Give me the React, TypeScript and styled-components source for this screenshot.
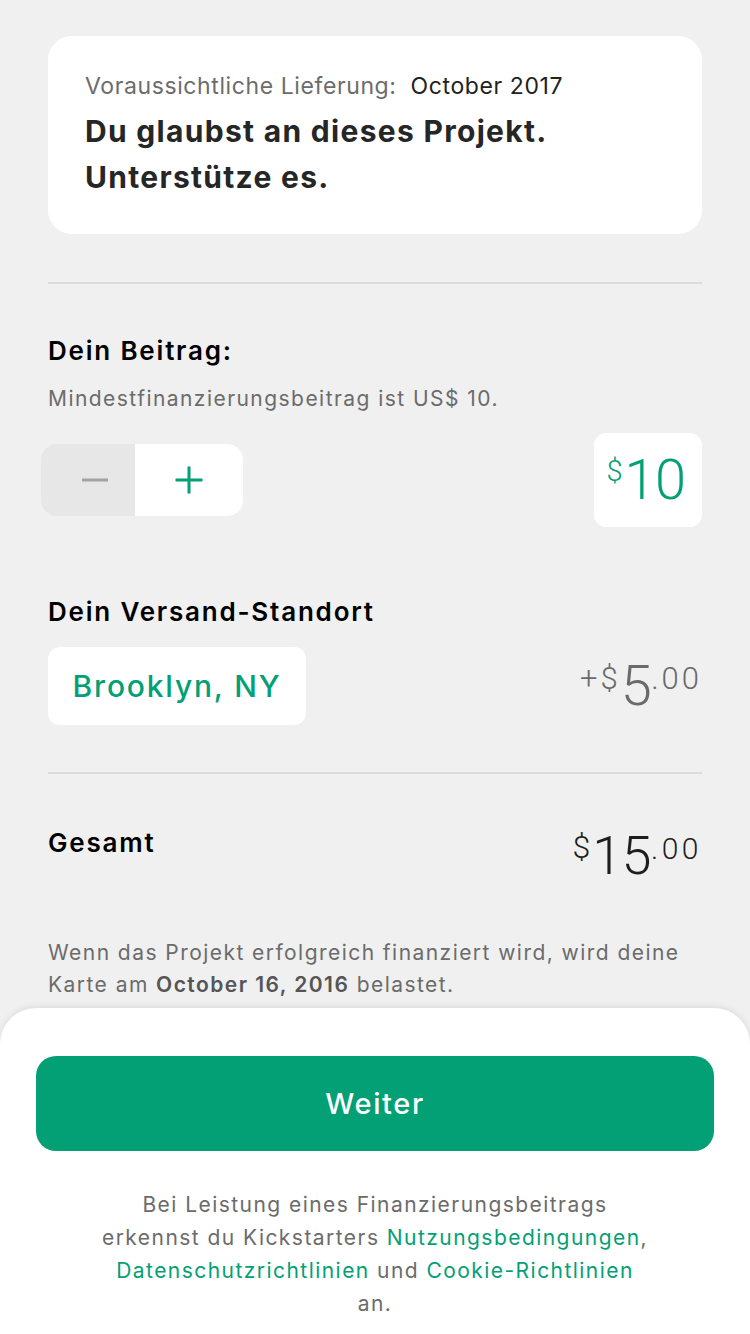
import React from "react";
import styled, { createGlobalStyle } from "styled-components";

const GREEN = "#02a074";

const Global = createGlobalStyle`
  html, body { margin: 0; padding: 0; background: #f0f0f0; }
  body { font-family: Inter, Roboto, "Noto Sans", sans-serif; -webkit-font-smoothing: antialiased; }
  * { box-sizing: border-box; }
`;

const Page = styled.div`
  width: 750px;
  height: 1334px;
  background: #f0f0f0;
  display: flex;
  flex-direction: column;
  overflow: hidden;
`;

const Content = styled.div`
  flex: 1;
  padding: 36px 48px 0;
  display: flex;
  flex-direction: column;
`;

const Card = styled.div`
  background: #fff;
  border-radius: 24px;
  padding: 36px 37px 36px;
  height: 198px;
`;

const Delivery = styled.div`
  font-size: 23px;
  line-height: 28px;
  color: #6c6c6c;
  display: flex;
  gap: 14px;
  letter-spacing: 0.6px;
`;

const DeliveryDate = styled.span`
  color: #222;
`;

const Headline = styled.h1`
  margin: 8px 0 0;
  font-size: 30px;
  line-height: 46px;
  font-weight: 700;
  color: #262626;
  letter-spacing: 1.3px;
`;

const Divider = styled.hr<{ $top: number }>`
  border: none;
  border-top: 2px solid #dcdcdc;
  margin: ${(p) => p.$top}px 0 0;
`;

const SectionTitle = styled.div<{ $top: number }>`
  margin-top: ${(p) => p.$top}px;
  font-size: 26px;
  line-height: 32px;
  font-weight: 600;
  color: #000;
  letter-spacing: 1.8px;
`;

const Note = styled.div<{ $top: number }>`
  margin-top: ${(p) => p.$top}px;
  font-size: 21px;
  line-height: 32px;
  color: #6b6b6b;
  letter-spacing: 1.45px;
`;

const Row = styled.div<{ $top: number; $align?: string }>`
  margin-top: ${(p) => p.$top}px;
  display: flex;
  justify-content: space-between;
  align-items: ${(p) => p.$align || "center"};
`;

const Stepper = styled.div`
  display: flex;
  height: 72px;
  width: 202px;
  margin-left: -7px;
  border-radius: 16px;
  overflow: hidden;
`;

const StepButton = styled.button<{ $active?: boolean }>`
  border: none;
  padding: 0 0 0 ${(p) => (p.$active ? 0 : 14)}px;
  background: ${(p) => (p.$active ? "#fff" : "#e7e7e7")};
  width: ${(p) => (p.$active ? 108 : 94)}px;
  display: flex;
  align-items: center;
  justify-content: center;
`;

const AmountBox = styled.div`
  background: #fff;
  border-radius: 12px;
  width: 108px;
  height: 94px;
  display: flex;
  align-items: center;
  justify-content: center;
  padding-right: 2px;
`;

const Sup = styled.span<{ $size: number; $offset: number; $ls?: number }>`
  font-size: ${(p) => p.$size}px;
  line-height: 1;
  margin-top: ${(p) => p.$offset}px;
  letter-spacing: ${(p) => p.$ls || 0}px;
`;

const Big = styled.span<{ $size: number; $gap?: number }>`
  font-size: ${(p) => p.$size}px;
  line-height: 1;
  letter-spacing: -0.5px;
  margin: 0 ${(p) => p.$gap || 0}px;
`;

const Money = styled.div<{ $color: string; $top?: number }>`
  display: flex;
  align-items: flex-start;
  color: ${(p) => p.$color};
  font-weight: 300;
  font-family: Roboto, Inter, sans-serif;
  margin-top: ${(p) => p.$top || 0}px;
`;

const Location = styled.div`
  background: #fff;
  border-radius: 12px;
  width: 258px;
  height: 78px;
  display: flex;
  align-items: center;
  justify-content: center;
  color: ${GREEN};
  font-size: 30px;
  font-weight: 500;
  letter-spacing: 1.8px;
`;

const Bold = styled.b`
  font-weight: 600;
  color: #555;
`;

const Sheet = styled.div`
  background: #fff;
  border-radius: 36px 36px 0 0;
  box-shadow: 0 -2px 6px rgba(0, 0, 0, 0.08);
  padding: 48px 36px 0;
  height: 326px;
`;

const Primary = styled.button`
  width: 100%;
  height: 95px;
  border: none;
  border-radius: 20px;
  background: ${GREEN};
  color: #fff;
  font-family: inherit;
  font-size: 29px;
  font-weight: 500;
  letter-spacing: 1.6px;
`;

const Legal = styled.p`
  margin: 37px 0 0;
  text-align: center;
  font-size: 21px;
  line-height: 33px;
  color: #6b6b6b;
  letter-spacing: 1.45px;
`;

const Link = styled.a`
  color: ${GREEN};
  text-decoration: none;
`;

const Minus = () => (
  <svg width="28" height="4" viewBox="0 0 28 4">
    <rect x="1" y="0.5" width="26" height="3" fill="#a2a2a2" />
  </svg>
);

const Plus = () => (
  <svg width="28" height="28" viewBox="0 0 28 28">
    <rect x="0.5" y="12.5" width="27" height="3" fill={GREEN} />
    <rect x="12.5" y="0.5" width="3" height="27" fill={GREEN} />
  </svg>
);

export default function App() {
  return (
    <Page>
      <Global />
      <Content>
        <Card>
          <Delivery>
            <span>Voraussichtliche Lieferung:</span>
            <DeliveryDate>October 2017</DeliveryDate>
          </Delivery>
          <Headline>
            Du glaubst an dieses Projekt.
            <br />
            Unterstütze es.
          </Headline>
        </Card>
        <Divider $top={48} />
        <SectionTitle $top={51}>Dein Beitrag:</SectionTitle>
        <Note $top={16}>Mindestfinanzierungsbeitrag ist US$ 10.</Note>
        <Row $top={18}>
          <Stepper>
            <StepButton aria-label="minus">
              <Minus />
            </StepButton>
            <StepButton $active aria-label="plus">
              <Plus />
            </StepButton>
          </Stepper>
          <AmountBox>
            <Money $color={GREEN}>
              <Sup $size={29} $offset={5}>$</Sup>
              <Big $size={56} $gap={2}>10</Big>
            </Money>
          </AmountBox>
        </Row>
        <SectionTitle $top={69}>Dein Versand-Standort</SectionTitle>
        <Row $top={19}>
          <Location>Brooklyn, NY</Location>
          <Money $color="#6a6a6a">
            <Sup $size={31} $offset={5} $ls={3}>+$</Sup>
            <Big $size={56}>5</Big>
            <Sup $size={31} $offset={5} $ls={3}>.00</Sup>
          </Money>
        </Row>
        <Divider $top={47} />
        <Row $top={53} $align="flex-start">
          <SectionTitle $top={0}>Gesamt</SectionTitle>
          <Money $color="#1e1e1e" $top={2}>
            <Sup $size={32} $offset={2} $ls={2}>$</Sup>
            <Big $size={54}>15</Big>
            <Sup $size={30} $offset={5} $ls={3.5}>.00</Sup>
          </Money>
        </Row>
        <Note $top={54}>
          Wenn das Projekt erfolgreich finanziert wird, wird deine
          <br />
          Karte am <Bold>October 16, 2016</Bold> belastet.
        </Note>
      </Content>
      <Sheet>
        <Primary>Weiter</Primary>
        <Legal>
          Bei Leistung eines Finanzierungsbeitrags
          <br />
          erkennst du Kickstarters <Link>Nutzungsbedingungen</Link>,
          <br />
          <Link>Datenschutzrichtlinien</Link> und <Link>Cookie-Richtlinien</Link>
          <br />
          an.
        </Legal>
      </Sheet>
    </Page>
  );
}
